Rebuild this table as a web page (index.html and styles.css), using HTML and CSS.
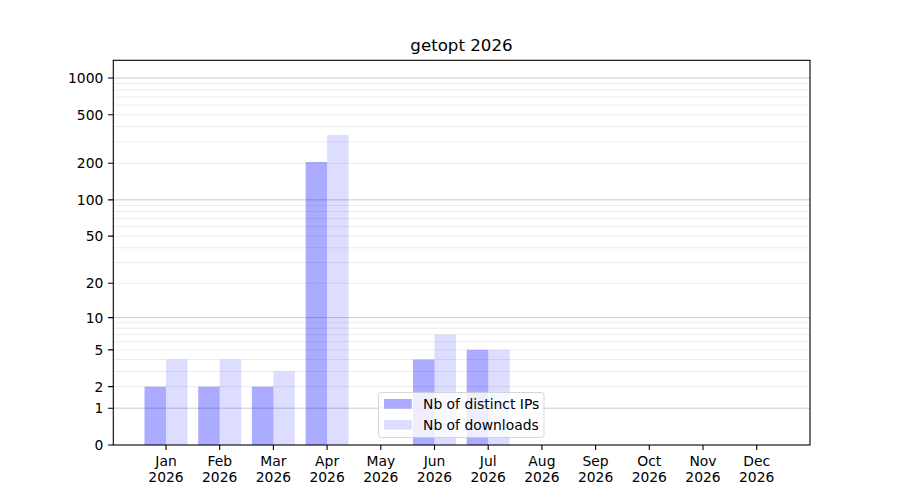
FILE: index.html
```html
<!DOCTYPE html>
<html lang="en">
<head>
<meta charset="utf-8">
<title>getopt 2026</title>
<link rel="stylesheet" href="styles.css">
</head>
<body>
<div class="figure">
<svg class="chart" width="900" height="500" viewBox="0 0 900 500" xmlns="http://www.w3.org/2000/svg">
  <text class="title" x="461.5" y="51">getopt 2026</text>

  <path class="grid-minor" d="M113 386.65H810M113 371.37H810M113 359.52H810M113 349.83H810M113 341.64H810M113 334.55H810M113 328.3H810M113 322.7H810M113 283.29H810M113 262.61H810M113 247.76H810M113 236.16H810M113 226.65H810M113 218.59H810M113 211.59H810M113 205.41H810M113 163.32H810M113 141.87H810M113 126.64H810M113 114.81H810M113 105.14H810M113 96.97H810M113 89.89H810M113 83.64H810"/>
  <path class="grid-major" d="M113 408.18H810M113 317.64H810M113 199.87H810M113 78.05H810"/>

  <g class="bars-ips">
    <rect x="144.5" y="386.65" width="21.5" height="58.35"/>
    <rect x="198.2" y="386.65" width="21.5" height="58.35"/>
    <rect x="251.9" y="386.65" width="21.5" height="58.35"/>
    <rect x="305.6" y="162" width="21.5" height="283"/>
    <rect x="413" y="359.52" width="21.5" height="85.48"/>
    <rect x="466.7" y="349.83" width="21.5" height="95.17"/>
  </g>
  <g class="bars-dl">
    <rect x="166" y="359.52" width="21.5" height="85.48"/>
    <rect x="219.7" y="359.52" width="21.5" height="85.48"/>
    <rect x="273.4" y="371.37" width="21.5" height="73.63"/>
    <rect x="327.1" y="134.93" width="21.5" height="310.07"/>
    <rect x="434.5" y="334.55" width="21.5" height="110.45"/>
    <rect x="488.2" y="349.83" width="21.5" height="95.17"/>
  </g>

  <rect class="spine" x="113.3" y="60.3" width="696.7" height="384.7"/>

  <path class="tick" d="M108.1 445H113.3M108.1 408.18H113.3M108.1 386.65H113.3M108.1 349.83H113.3M108.1 317.64H113.3M108.1 283.29H113.3M108.1 236.16H113.3M108.1 199.87H113.3M108.1 163.32H113.3M108.1 114.81H113.3M108.1 78.05H113.3"/>
  <path class="tick" d="M166 445V449.9M219.7 445V449.9M273.4 445V449.9M327.1 445V449.9M380.8 445V449.9M434.5 445V449.9M488.2 445V449.9M541.9 445V449.9M595.6 445V449.9M649.3 445V449.9M703 445V449.9M756.7 445V449.9"/>

  <g class="ylabels">
    <text x="103.3" y="450">0</text>
    <text x="103.3" y="413.2">1</text>
    <text x="103.3" y="391.7">2</text>
    <text x="103.3" y="354.8">5</text>
    <text x="103.3" y="322.6">10</text>
    <text x="103.3" y="288.3">20</text>
    <text x="103.3" y="241.2">50</text>
    <text x="103.3" y="204.9">100</text>
    <text x="103.3" y="168.3">200</text>
    <text x="103.3" y="119.8">500</text>
    <text x="103.3" y="83.1">1000</text>
  </g>

  <g class="xlabels">
    <text x="166" y="466">Jan</text><text x="166" y="482">2026</text>
    <text x="219.7" y="466">Feb</text><text x="219.7" y="482">2026</text>
    <text x="273.4" y="466">Mar</text><text x="273.4" y="482">2026</text>
    <text x="327.1" y="466">Apr</text><text x="327.1" y="482">2026</text>
    <text x="380.8" y="466">May</text><text x="380.8" y="482">2026</text>
    <text x="434.5" y="466">Jun</text><text x="434.5" y="482">2026</text>
    <text x="488.2" y="466">Jul</text><text x="488.2" y="482">2026</text>
    <text x="541.9" y="466">Aug</text><text x="541.9" y="482">2026</text>
    <text x="595.6" y="466">Sep</text><text x="595.6" y="482">2026</text>
    <text x="649.3" y="466">Oct</text><text x="649.3" y="482">2026</text>
    <text x="703" y="466">Nov</text><text x="703" y="482">2026</text>
    <text x="756.7" y="466">Dec</text><text x="756.7" y="482">2026</text>
  </g>

  <g class="legend">
    <rect class="legend-box" x="378.5" y="392.5" width="165.5" height="45" rx="2.8"/>
    <rect class="swatch-ips" x="384" y="399" width="27.8" height="9.7"/>
    <rect class="swatch-dl" x="384" y="420" width="27.8" height="9.7"/>
    <text class="legend-text" x="423" y="409">Nb of distinct IPs</text>
    <text class="legend-text" x="423" y="430">Nb of downloads</text>
  </g>
</svg>
</div>
</body>
</html>
```
FILE: styles.css
```css
html, body {
  margin: 0;
  padding: 0;
  background: #ffffff;
}

.figure {
  width: 900px;
  height: 500px;
  overflow: hidden;
}

.chart {
  display: block;
  font-family: "DejaVu Sans", "Liberation Sans", sans-serif;
}

.title {
  font-size: 16.67px;
  text-anchor: middle;
  fill: #000000;
}

.grid-minor {
  fill: none;
  stroke: rgba(0, 0, 0, 0.08);
  stroke-width: 1;
}

.grid-major {
  fill: none;
  stroke: rgba(0, 0, 0, 0.21);
  stroke-width: 1;
}

.bars-ips rect,
.swatch-ips {
  fill: rgba(0, 0, 255, 0.33);
}

.bars-dl rect,
.swatch-dl {
  fill: rgba(0, 0, 255, 0.135);
}

.spine {
  fill: none;
  stroke: #000000;
  stroke-width: 1.1;
}

.tick {
  fill: none;
  stroke: #000000;
  stroke-width: 1.1;
}

.ylabels text {
  font-size: 13.89px;
  text-anchor: end;
  fill: #000000;
}

.xlabels text {
  font-size: 13.89px;
  text-anchor: middle;
  fill: #000000;
}

.legend-box {
  fill: rgba(255, 255, 255, 0.8);
  stroke: rgba(204, 204, 204, 0.8);
  stroke-width: 1;
}

.legend-text {
  font-size: 13.89px;
  fill: #000000;
}
```
